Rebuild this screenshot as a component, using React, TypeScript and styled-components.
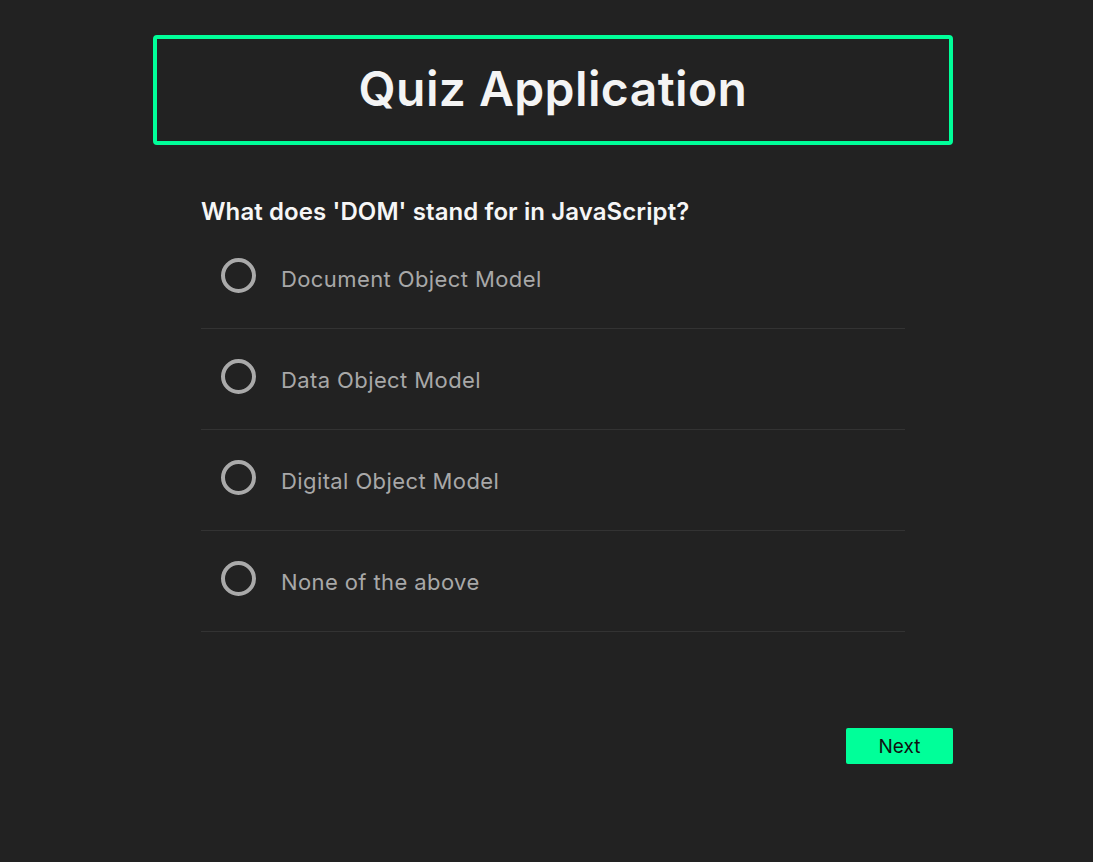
import React from "react";
import styled, { createGlobalStyle } from "styled-components";

const GlobalStyle = createGlobalStyle`
  html, body {
    margin: 0;
    padding: 0;
    background: #222222;
  }
  body {
    font-family: Inter, "Noto Sans", "Liberation Sans", sans-serif;
  }
`;

const Page = styled.div`
  padding: 35px 140px 0 153px;
`;

const Container = styled.main`
  width: 800px;
  display: flex;
  flex-direction: column;
`;

const Header = styled.header`
  height: 110px;
  box-sizing: border-box;
  border: 4px solid #00ff99;
  border-radius: 4px;
  display: flex;
  align-items: center;
  justify-content: center;
`;

const Title = styled.h1`
  margin: -4px 0 0;
  font-size: 48px;
  font-weight: 600;
  letter-spacing: 0.4px;
  color: #f4f4f4;
`;

const QuizBody = styled.section`
  padding: 51px 48px 0;
  display: flex;
  flex-direction: column;
`;

const Question = styled.h2`
  margin: 0;
  font-size: 24px;
  font-weight: 600;
  letter-spacing: 0.1px;
  color: #f6f6f6;
  line-height: 32px;
`;

const OptionList = styled.ul`
  list-style: none;
  margin: 0;
  padding: 0;
`;

const OptionRow = styled.li`
  height: 100px;
  box-sizing: content-box;
  border-bottom: 1px solid #333333;
  display: flex;
  align-items: center;
  padding-left: 20px;
  gap: 25px;
`;

const Radio = styled.span`
  width: 35px;
  height: 35px;
  box-sizing: border-box;
  border: 4px solid #aaaaaa;
  border-radius: 50%;
  flex-shrink: 0;
  margin-top: -6px;
`;

const OptionLabel = styled.span`
  font-size: 22px;
  letter-spacing: 0.4px;
  color: #a8a8a8;
  margin-top: 2px;
`;

const Footer = styled.div`
  display: flex;
  justify-content: flex-end;
  margin-top: 96px;
`;

const NextButton = styled.button`
  width: 107px;
  height: 36px;
  border: none;
  border-radius: 2px;
  background: #00ff99;
  color: #111;
  font-family: Inter, "Noto Sans", sans-serif;
  font-size: 19px;
  cursor: pointer;
`;

const options = [
  "Document Object Model",
  "Data Object Model",
  "Digital Object Model",
  "None of the above",
];

export default function App() {
  return (
    <>
      <GlobalStyle />
      <Page>
        <Container>
          <Header>
            <Title>Quiz Application</Title>
          </Header>
          <QuizBody>
            <Question>What does 'DOM' stand for in JavaScript?</Question>
            <OptionList>
              {options.map((o) => (
                <OptionRow key={o}>
                  <Radio />
                  <OptionLabel>{o}</OptionLabel>
                </OptionRow>
              ))}
            </OptionList>
          </QuizBody>
          <Footer>
            <NextButton>Next</NextButton>
          </Footer>
        </Container>
      </Page>
    </>
  );
}
